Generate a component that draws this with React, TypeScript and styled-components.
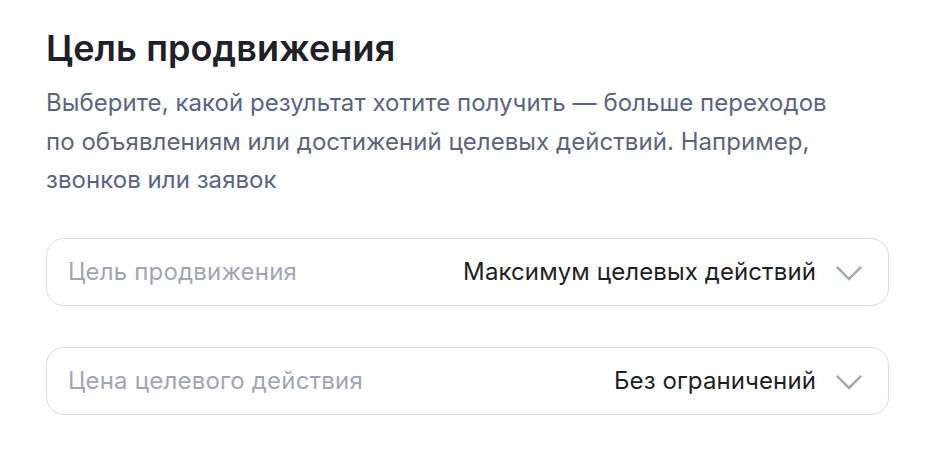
import React from "react";
import styled, { createGlobalStyle } from "styled-components";

const GlobalStyle = createGlobalStyle`
    body {
        margin: 0;
        background: #ffffff;
        font-family: 'Inter', 'Noto Sans', sans-serif;
    }
`;

const Page = styled.div`
    width: 942px;
    height: 466px;
    box-sizing: border-box;
    padding: 26px 53px 0 46px;
    display: flex;
    flex-direction: column;
`;

const Title = styled.h1`
    margin: 0;
    font-size: 36px;
    line-height: 44px;
    font-weight: 600;
    letter-spacing: 0.1px;
    color: #1f2029;
`;

const Description = styled.p`
    margin: 14px 0 0;
    font-size: 24px;
    line-height: 38.5px;
    font-weight: 400;
    letter-spacing: 0.05px;
    color: #5b6480;
`;

const Fields = styled.div`
    display: flex;
    flex-direction: column;
    gap: 41px;
    margin-top: 38px;
`;

const SelectBox = styled.div`
    height: 68px;
    box-sizing: border-box;
    border: 1.5px solid #d9dce5;
    border-radius: 18px;
    background: #ffffff;
    display: flex;
    align-items: center;
    padding: 0 25px 0 21px;
`;

const Label = styled.span`
    flex: 1;
    font-size: 24px;
    letter-spacing: 0.2px;
    color: #a0a6b7;
`;

const Value = styled.span`
    font-size: 24px;
    letter-spacing: 0.1px;
    color: #1e1f26;
`;

const Chevron = styled.svg`
    margin: 4px 0 0 19px;
    flex-shrink: 0;
`;

type SelectProps = {
    label: string;
    value: string;
};

const Select: React.FC<SelectProps> = ({ label, value }) => (
    <SelectBox>
        <Label>{label}</Label>
        <Value>{value}</Value>
        <Chevron width="28" height="17" viewBox="0 0 28 17" fill="none">
            <path d="M1.8 1.8 L14 14 L26.2 1.8" stroke="#a3a9ba" strokeWidth="2.5" />
        </Chevron>
    </SelectBox>
);

export default function App() {
    return (
        <>
            <GlobalStyle />
            <Page>
                <Title>Цель продвижения</Title>
                <Description>
                    Выберите, какой результат хотите получить — больше переходов
                    <br />
                    по объявлениям или достижений целевых действий. Например,
                    <br />
                    звонков или заявок
                </Description>
                <Fields>
                    <Select label="Цель продвижения" value="Максимум целевых действий" />
                    <Select label="Цена целевого действия" value="Без ограничений" />
                </Fields>
            </Page>
        </>
    );
}
